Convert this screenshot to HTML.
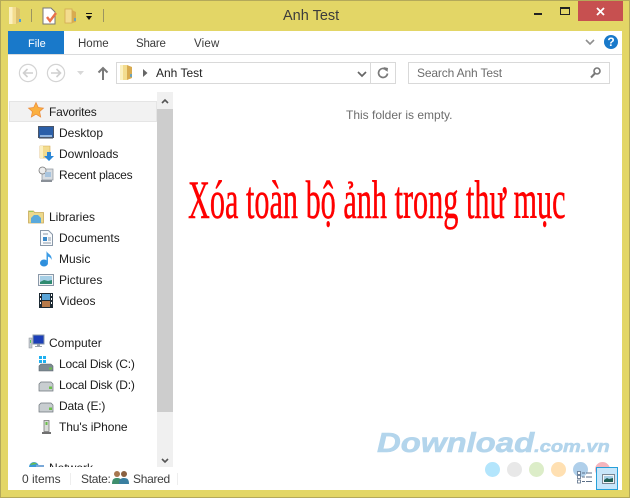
<!DOCTYPE html>
<html><head><meta charset="utf-8">
<style>
html,body{margin:0;padding:0}
body{width:630px;height:498px;overflow:hidden;position:relative;background:#e3d666;font-family:"Liberation Sans",sans-serif;font-size:12px;color:#1e1e1e}
.a{position:absolute}
.t{position:absolute;white-space:nowrap;line-height:16px;font-size:12px;color:#1c1c1c}
svg{position:absolute;overflow:visible}
</style></head><body>
<div class="a" style="left:0;top:0;width:628px;height:496px;border:1px solid #b4a95a"></div>
<div class="a" style="left:8px;top:31px;width:614px;height:459px;background:#fff"></div>

<!-- title bar -->
<svg style="left:9px;top:7px" width="14" height="17" viewBox="0 0 14 17"><path d="M0 0h7l4 2v13l-4 2H0z" fill="#f3dc8e"/><path d="M0 0h3.500v17H0z" fill="#fbf0c0"/><path d="M7 0l4 2v13l-4 2z" fill="#dcc06c"/><path d="M11 12v3" stroke="#4a9fd8" stroke-width="2"/></svg>
<div class="a" style="left:31px;top:9px;width:1px;height:13px;background:#9c9460"></div>
<svg style="left:41px;top:7px" width="18" height="18" viewBox="0 0 18 18"><path d="M2 1h8l4 4v12H2z" fill="#fff" stroke="#777"/><path d="M6 10l3 4 6-8" fill="none" stroke="#e8704a" stroke-width="2.4"/></svg>
<svg style="left:64px;top:8px" width="14" height="16" viewBox="0 0 14 16"><path d="M1 1h7v14H1z" fill="#f3dc8e" stroke="#d2a850" stroke-width=".8"/><path d="M8 2l4 2v10l-4 1z" fill="#d8ab50"/><path d="M11 10v3" stroke="#4a9fd8" stroke-width="1.5"/></svg>
<svg style="left:85px;top:13px" width="8" height="8" viewBox="0 0 8 8"><path d="M1 .5h6" stroke="#111"/><path d="M1 3h6L4 7z" fill="#111"/></svg>
<div class="a" style="left:103px;top:9px;width:1px;height:13px;background:#9c9460"></div>
<div class="t" style="left:283px;top:7px;font-size:14.500px;line-height:18px;color:#3c3c3c">Anh Test</div>
<div class="a" style="left:534px;top:13px;width:8px;height:2px;background:#222"></div>
<div class="a" style="left:560px;top:7px;width:8px;height:5px;border:1.5px solid #222;border-top-width:2px"></div>
<div class="a" style="left:578px;top:1px;width:45px;height:20px;background:#c75050"></div>
<svg style="left:596px;top:7px" width="9" height="9" viewBox="0 0 9 9"><path d="M1 1l7 7M8 1L1 8" stroke="#fff" stroke-width="1.8"/></svg>

<!-- ribbon tabs -->
<div class="a" style="left:8px;top:31px;width:56px;height:23px;background:#1979ca"></div>
<div class="t" style="left:28px;top:36px;color:#fff;font-size:11px">File</div>
<div class="t" style="left:78px;top:36px;font-size:11.500px;color:#3b3b3b">Home</div>
<div class="t" style="left:136px;top:36px;font-size:11.500px;color:#3b3b3b;letter-spacing:-.2px">Share</div>
<div class="t" style="left:194px;top:36px;font-size:11.500px;color:#3b3b3b;letter-spacing:.2px">View</div>
<div class="a" style="left:8px;top:54px;width:614px;height:1px;background:#dadbdc"></div>
<svg style="left:585px;top:39px" width="10" height="7" viewBox="0 0 10 7"><path d="M1 1l4 4 4-4" fill="none" stroke="#8f8f8f" stroke-width="1.6"/></svg>
<div class="a" style="left:604px;top:35px;width:14px;height:14px;border-radius:50%;background:#1979ca;color:#fff;font-weight:bold;font-size:12px;line-height:14px;text-align:center">?</div>

<!-- nav -->
<svg style="left:18px;top:63px" width="20" height="20" viewBox="0 0 20 20"><circle cx="10" cy="10" r="8.6" fill="#fff" stroke="#d4d4d4" stroke-width="1.2"/><path d="M15 10H6M9.500 6l-4 4 4 4" fill="none" stroke="#cfcfcf" stroke-width="1.6"/></svg>
<svg style="left:46px;top:63px" width="20" height="20" viewBox="0 0 20 20"><circle cx="10" cy="10" r="8.6" fill="#fff" stroke="#d4d4d4" stroke-width="1.2"/><path d="M5 10h9M10.500 6l4 4-4 4" fill="none" stroke="#cfcfcf" stroke-width="1.6"/></svg>
<svg style="left:77px;top:71px" width="8" height="5" viewBox="0 0 8 5"><path d="M0 0h7L3.500 4z" fill="#d8d8d8"/></svg>
<svg style="left:97px;top:66px" width="12" height="14" viewBox="0 0 12 14"><path d="M6 14V2M1.500 6.500L6 2l4.500 4.500" fill="none" stroke="#7a7a7a" stroke-width="2"/></svg>
<div class="a" style="left:116px;top:62px;width:278px;height:20px;border:1px solid #d9d9d9"></div>
<svg style="left:120px;top:64px" width="13" height="17" viewBox="0 0 13 17"><path d="M0 1h7v15H0z" fill="#f3dc8e"/><path d="M0 1h3v15H0z" fill="#fbf0c0"/><path d="M7 1l5 2v11l-5 2z" fill="#d8ab50"/><path d="M11 10v3" stroke="#4a9fd8" stroke-width="1.500"/></svg>
<svg style="left:143px;top:69px" width="5" height="8" viewBox="0 0 5 8"><path d="M0 0l4.500 4L0 8z" fill="#666"/></svg>
<div class="t" style="left:156px;top:65px;font-size:12px;color:#222">Anh Test</div>
<svg style="left:357px;top:71px" width="10" height="7" viewBox="0 0 10 7"><path d="M1 1l4 4 4-4" fill="none" stroke="#666" stroke-width="1.700"/></svg>
<div class="a" style="left:370px;top:62px;width:1px;height:21px;background:#d9d9d9"></div>
<svg style="left:377px;top:66px" width="12" height="13" viewBox="0 0 12 13"><path d="M9.800 4.500A4.500 4.500 0 1 0 10.500 7.500" fill="none" stroke="#7a7a7a" stroke-width="1.700"/><path d="M6.500 1l4.500 1-.5 4z" fill="#7a7a7a"/></svg>
<div class="a" style="left:408px;top:62px;width:200px;height:20px;border:1px solid #d9d9d9"></div>
<div class="t" style="left:417px;top:65px;color:#6d6d6d;font-size:12px;letter-spacing:-.15px">Search Anh Test</div>
<svg style="left:590px;top:67px" width="11" height="12" viewBox="0 0 11 12"><circle cx="7" cy="4" r="3" fill="none" stroke="#777" stroke-width="1.600"/><path d="M4.800 6.500L1 10.500" stroke="#777" stroke-width="2"/></svg>

<!-- sidebar -->
<div class="a" style="left:9px;top:101px;width:146px;height:19px;background:#f2f2f2;border:1px solid #e5e5e5"></div>
<div class="a" style="left:157px;top:92px;width:16px;height:375px;background:#f0f0f0"></div>
<div class="a" style="left:157px;top:109px;width:16px;height:303px;background:#cdcdcd"></div>
<svg style="left:161px;top:98px" width="8" height="6" viewBox="0 0 8 6"><path d="M1 5l3-3 3 3" fill="none" stroke="#555" stroke-width="1.600"/></svg>
<svg style="left:161px;top:458px" width="8" height="6" viewBox="0 0 8 6"><path d="M1 1l3 3 3-3" fill="none" stroke="#555" stroke-width="1.600"/></svg>

<svg style="left:28px;top:102px" width="16" height="16" viewBox="0 0 16 16"><path d="M8 .5l2.300 5 5.200.600-3.900 3.500 1.100 5.400L8 12.200 3.300 15l1.100-5.400L.5 6.100l5.200-.600z" fill="#fbb040" stroke="#ea8a3a" stroke-width=".7"/></svg>
<div class="t" style="left:49px;top:104px;letter-spacing:-.2px">Favorites</div>
<svg style="left:38px;top:126px" width="16" height="14" viewBox="0 0 16 14"><rect x=".5" y=".5" width="15" height="11" fill="#2b5fa8" stroke="#4a5568"/><path d="M2 9h12v2H2z" fill="#8fb4df"/><path d="M1 12h14v1H1z" fill="#9aa3ad"/></svg>
<div class="t" style="left:59px;top:125px">Desktop</div>
<svg style="left:39px;top:145px" width="15" height="17" viewBox="0 0 15 17"><path d="M1 1h10v12H1z" fill="#f3dc8e" stroke="#d2a850" stroke-width=".6"/><path d="M1 1h3v12H1z" fill="#fbf0c0"/><path d="M8 7h4v4h3l-5 5-5-5h3z" fill="#2a86d6"/></svg>
<div class="t" style="left:59px;top:146px">Downloads</div>
<svg style="left:38px;top:166px" width="16" height="17" viewBox="0 0 16 17"><rect x="4" y="3" width="11" height="11" fill="#d8dde2" stroke="#8a9098" stroke-width=".7"/><circle cx="4.500" cy="4.500" r="3.500" fill="#eee" stroke="#777" stroke-width=".8"/><path d="M7 6h6v5H7z" fill="#a8c4de"/><path d="M3 14h11v2H3z" fill="#8a9098"/></svg>
<div class="t" style="left:59px;top:167px;letter-spacing:-.2px">Recent places</div>

<svg style="left:28px;top:208px" width="16" height="16" viewBox="0 0 16 16"><path d="M.5 3h5l1 1.500h9V15H.5z" fill="#ecd98c" stroke="#c9a95a" stroke-width=".8"/><path d="M1 3h4v1H1z" fill="#9acd5a"/><path d="M3 10l3-3h4l3 3v5H3z" fill="#5aa9dc"/></svg>
<div class="t" style="left:49px;top:209px">Libraries</div>
<svg style="left:40px;top:230px" width="13" height="16" viewBox="0 0 13 16"><path d="M.5.500h8l4 4v11H.5z" fill="#f8fafc" stroke="#8a98a8"/><path d="M3 7h4v4H3z" fill="#3a88c8"/><path d="M3 4h5M8 8h3M8 10h3M3 13h8" stroke="#8a98a8"/></svg>
<div class="t" style="left:59px;top:230px">Documents</div>
<svg style="left:40px;top:250px" width="13" height="17" viewBox="0 0 13 17"><ellipse cx="4" cy="13" rx="4" ry="3.500" fill="#2f8fdc"/><path d="M6.500 13V1c1 3 6 3.500 5 9-.8-3-3-3-3.500-3.500V13z" fill="#3d9ce6"/></svg>
<div class="t" style="left:59px;top:251px">Music</div>
<svg style="left:38px;top:274px" width="16" height="12" viewBox="0 0 16 12"><rect x=".5" y=".5" width="15" height="11" fill="#f2f4f6" stroke="#8a98a8"/><rect x="2" y="2" width="12" height="8" fill="#a6cfe6"/><path d="M2 8l4-2 4 1 4-1v4H2z" fill="#2e8a70"/></svg>
<div class="t" style="left:59px;top:272px">Pictures</div>
<svg style="left:39px;top:293px" width="14" height="15" viewBox="0 0 14 15"><rect width="14" height="15" fill="#1d2a33"/><rect x="3" y="1" width="8" height="6" fill="#5aa5d8"/><rect x="3" y="8" width="8" height="6" fill="#b77a4a"/><path d="M1 1h1v2H1zM1 5h1v2H1zM1 9h1v2H1zM12 1h1v2h-1zM12 5h1v2h-1zM12 9h1v2h-1z" fill="#fff"/></svg>
<div class="t" style="left:59px;top:293px">Videos</div>

<svg style="left:28px;top:334px" width="17" height="16" viewBox="0 0 17 16"><rect x="5" y="1" width="11" height="9" fill="#1c3fb8" stroke="#8a98a8"/><path d="M9 10h3v2h2v1H7v-1h2z" fill="#9aa3ad"/><rect x="1" y="4" width="3" height="10" fill="#c6ccd2" stroke="#8a9098" stroke-width=".5"/><rect x="2" y="6" width="1" height="3" fill="#5ac85a"/></svg>
<div class="t" style="left:49px;top:335px">Computer</div>
<svg style="left:38px;top:355px" width="16" height="17" viewBox="0 0 16 17"><path d="M1 11l2-2h10l2 2v5H1z" fill="#7d8a92" stroke="#5b666e" stroke-width=".6"/><rect x="11" y="12.500" width="3" height="2" fill="#6cc04a"/><path d="M1 1h3v3H1zM5 1h3v3H5zM1 5h3v3H1zM5 5h3v3H5z" fill="#1eb0f0"/></svg>
<div class="t" style="left:59px;top:356px;letter-spacing:-.2px">Local Disk (C:)</div>
<svg style="left:38px;top:381px" width="16" height="11" viewBox="0 0 16 11"><path d="M1 3l2-2h10l2 2v7H1z" fill="#c8cdd0" stroke="#6d767c" stroke-width=".7"/><rect x="11" y="5.500" width="3" height="2.500" fill="#6cc04a"/></svg>
<div class="t" style="left:59px;top:377px;letter-spacing:-.2px">Local Disk (D:)</div>
<svg style="left:38px;top:402px" width="16" height="11" viewBox="0 0 16 11"><path d="M1 3l2-2h10l2 2v7H1z" fill="#c8cdd0" stroke="#6d767c" stroke-width=".7"/><rect x="11" y="5.500" width="3" height="2.500" fill="#6cc04a"/></svg>
<div class="t" style="left:59px;top:398px;letter-spacing:-.2px">Data (E:)</div>
<svg style="left:41px;top:420px" width="11" height="14" viewBox="0 0 11 14"><rect x="3" y=".5" width="5" height="11" fill="#d9dcd8" stroke="#777" stroke-width=".8"/><rect x="4.500" y="2" width="2" height="3" fill="#6cc04a"/><path d="M1 13h9" stroke="#333" stroke-width="1.400"/></svg>
<div class="t" style="left:59px;top:419px;letter-spacing:-.1px">Thu's iPhone</div>
<div class="a" style="left:20px;top:458px;width:137px;height:9px;overflow:hidden">
 <svg style="left:8px;top:3px" width="16" height="14" viewBox="0 0 16 14"><circle cx="6" cy="6" r="5" fill="#3a9ad8"/><path d="M2 4c2-3 5-3 7-1z" fill="#6cc04a"/><rect x="8" y="4" width="8" height="4" fill="#7aa8d8"/></svg>
 <div class="t" style="left:29px;top:2px">Network</div>
</div>

<!-- status bar -->
<div class="t" style="left:22px;top:471px;color:#3e3e3e">0 items</div>
<div class="a" style="left:70px;top:473px;width:1px;height:12px;background:#eeeeee"></div>
<div class="t" style="left:81px;top:471px;color:#3e3e3e;letter-spacing:-.3px">State:</div>
<svg style="left:112px;top:470px" width="17" height="15" viewBox="0 0 17 15"><circle cx="5" cy="4" r="3" fill="#a87850"/><path d="M0 14c0-5 2-6 5-6s5 1 5 6z" fill="#3f8f6e"/><circle cx="12" cy="4" r="3" fill="#8a6040"/><path d="M7 14c0-5 2-6 5-6s5 1 5 6z" fill="#3a7fa0"/></svg>
<div class="t" style="left:133px;top:471px;color:#3e3e3e;letter-spacing:-.3px">Shared</div>
<div class="a" style="left:177px;top:473px;width:1px;height:12px;background:#eeeeee"></div>

<!-- content -->
<div class="t" style="left:346px;top:107px;color:#6d6d6d;font-size:12px">This folder is empty.</div>
<div class="a" style="left:188px;top:169px;white-space:nowrap;font-family:'Liberation Serif','Noto Serif CJK SC',serif;font-size:54px;line-height:62px;color:#ff0000;-webkit-text-stroke:.5px #ff0000;transform-origin:0 0;transform:scaleX(.56)">Xóa toàn bộ ảnh trong thư mục</div>

<!-- watermark -->
<div class="a" style="left:377px;top:428px;white-space:nowrap;font-family:'Liberation Sans',sans-serif;font-weight:bold;font-style:italic;font-size:28px;line-height:30px;color:#b3d5ec;-webkit-text-stroke:.6px #b3d5ec;transform-origin:0 0;transform:scaleX(1.175)">Download<span style="font-size:17px">.com.vn</span></div>
<div class="a" style="left:484.500px;top:461.500px;width:15px;height:15px;border-radius:50%;background:#b3e5fc"></div>
<div class="a" style="left:506.500px;top:461.500px;width:15px;height:15px;border-radius:50%;background:#e8e8e8"></div>
<div class="a" style="left:528.500px;top:461.500px;width:15px;height:15px;border-radius:50%;background:#dcedc8"></div>
<div class="a" style="left:550.500px;top:461.500px;width:15px;height:15px;border-radius:50%;background:#ffe0b2"></div>
<div class="a" style="left:572.500px;top:461.500px;width:15px;height:15px;border-radius:50%;background:#afcfea"></div>
<div class="a" style="left:594.500px;top:461.500px;width:15px;height:15px;border-radius:50%;background:#f5b5bd"></div>

<!-- view buttons -->
<svg style="left:577px;top:471px" width="16" height="13" viewBox="0 0 16 13"><g fill="#fff" stroke="#5b6f88" stroke-width=".8"><rect x=".5" y=".5" width="3" height="3"/><rect x=".5" y="4.500" width="3" height="3"/><rect x=".5" y="9" width="3" height="3"/></g><path d="M5 2h3M9 2h6M5 6h3M9 6h6M5 10.500h3M9 10.500h6" stroke="#5b6f88"/></svg>
<div class="a" style="left:596px;top:467px;width:20px;height:21px;background:#c8e6fa;border:1px solid #26a0da"></div>
<svg style="left:602px;top:474px" width="13" height="10" viewBox="0 0 13 10"><rect x=".5" y=".5" width="12" height="9" fill="#f3f5f7" stroke="#7a8794"/><rect x="2" y="2" width="9" height="6" fill="#a6cfe6"/><path d="M2 6l3-2 2 1 4-1v4H2z" fill="#1f5f55"/></svg>
</body></html>
